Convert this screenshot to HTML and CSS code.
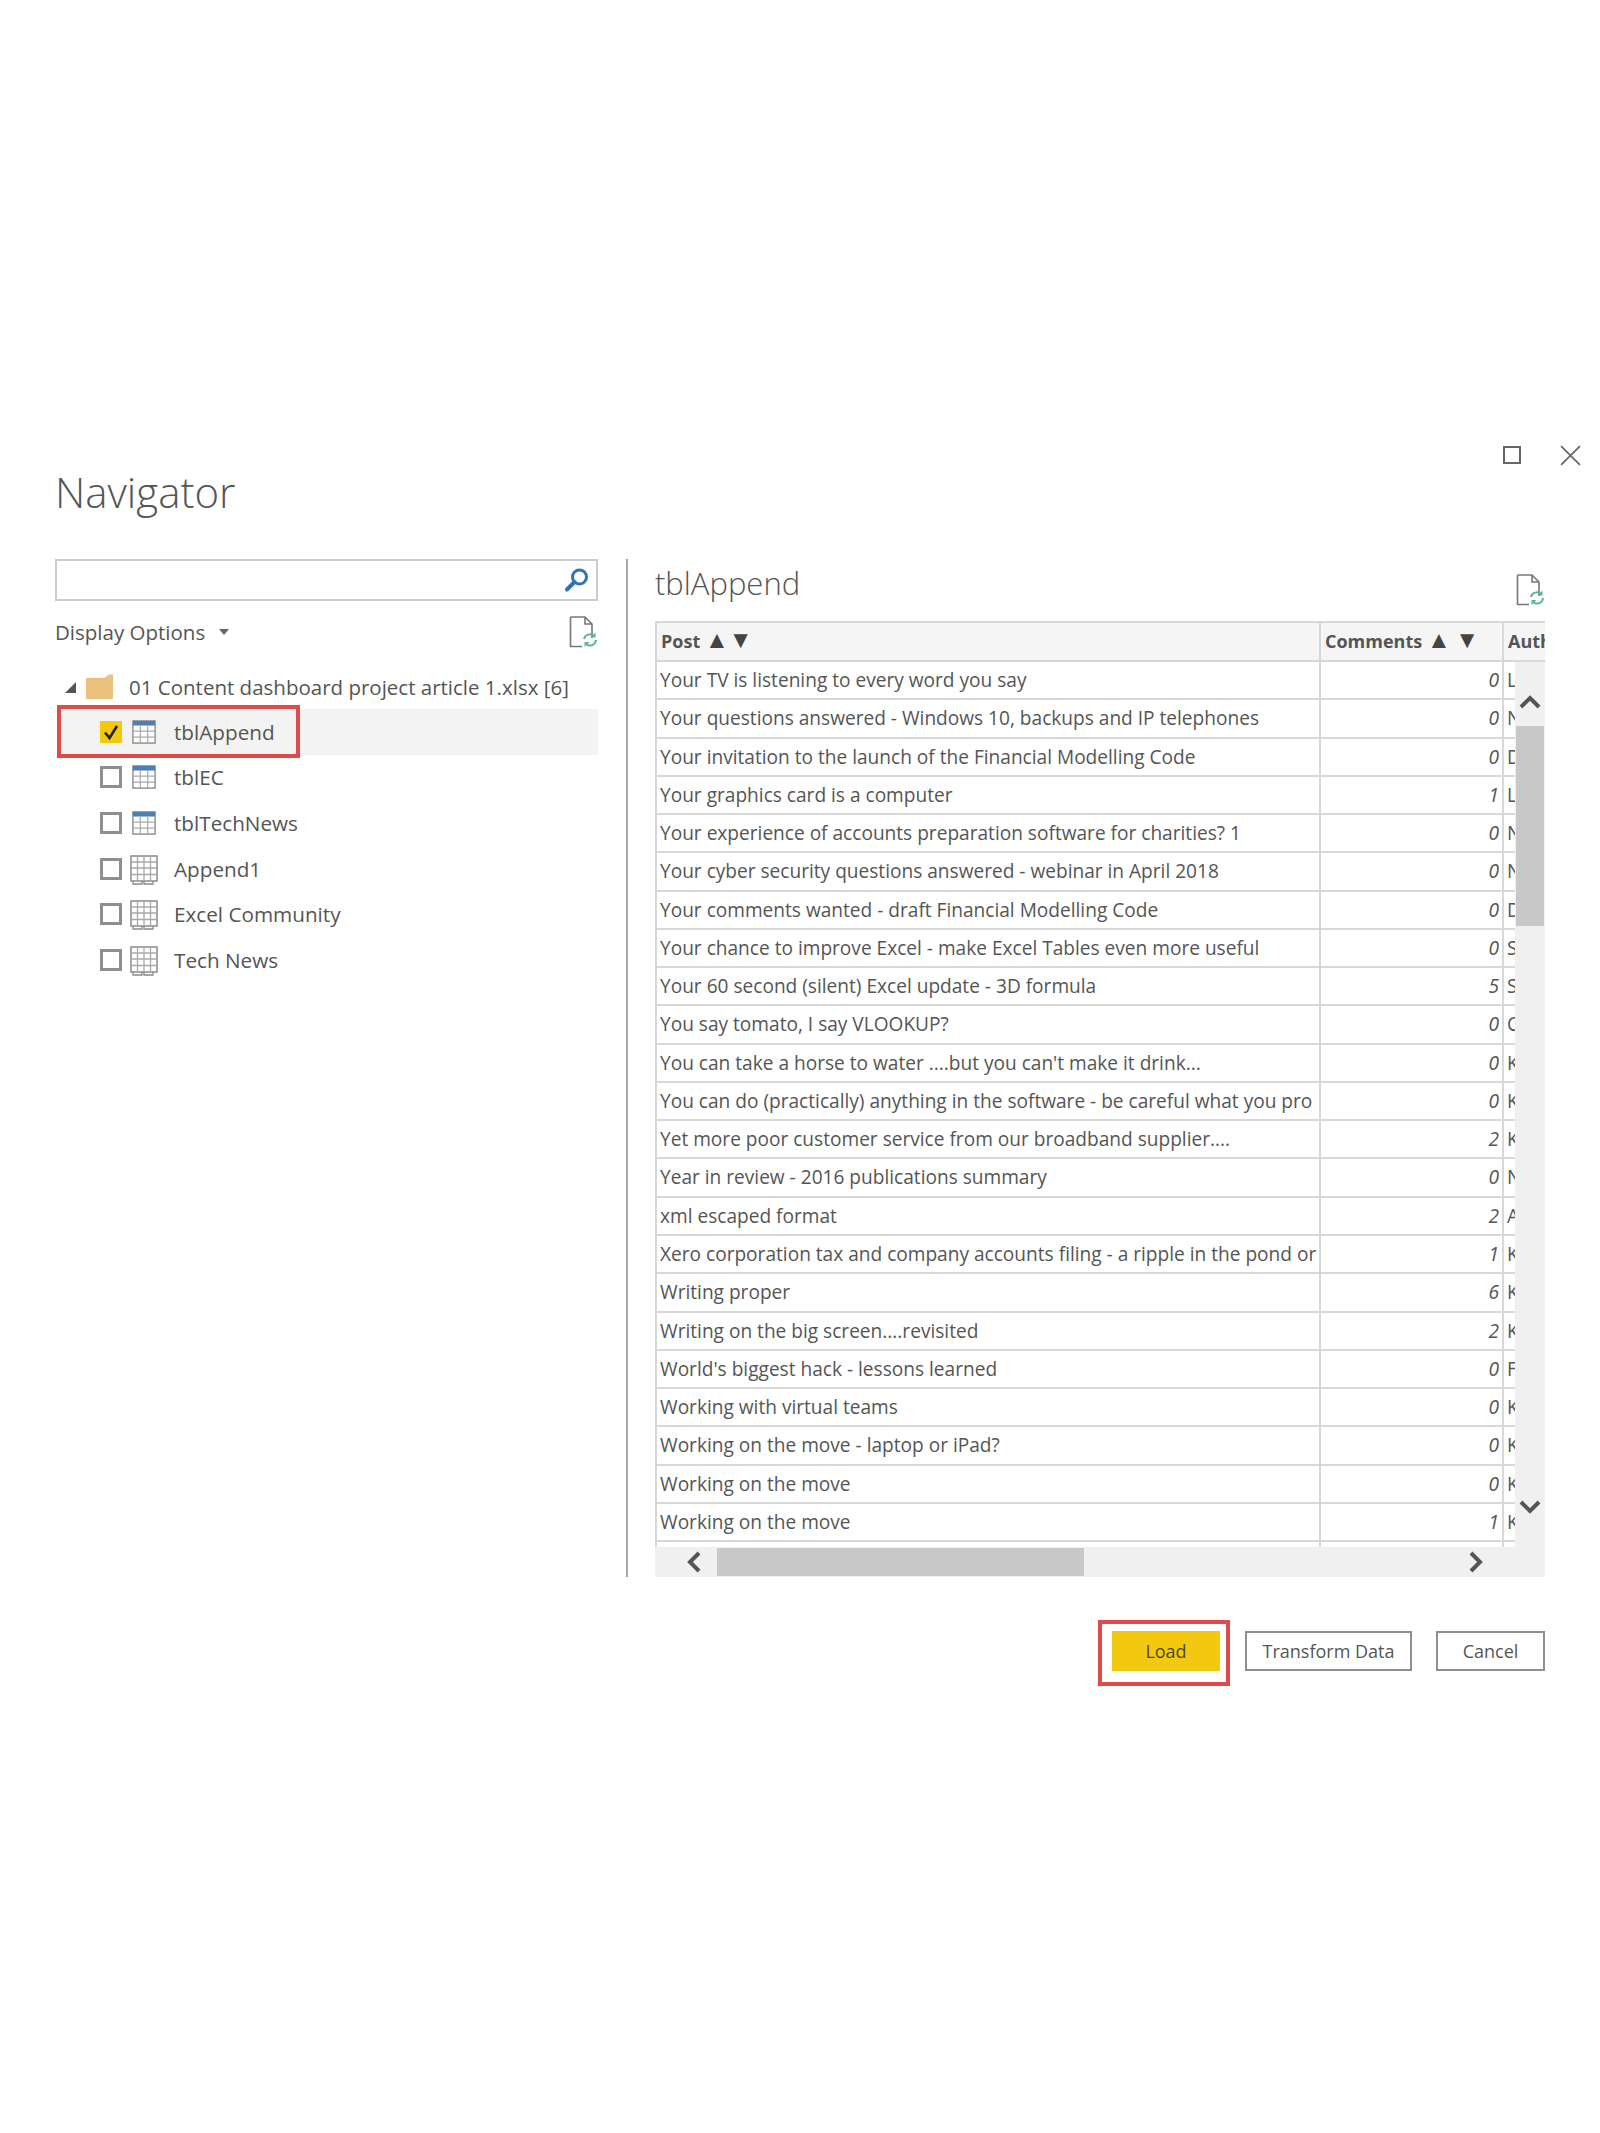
FILE: index.html
```html
<!DOCTYPE html>
<html lang="en">
<head>
  <meta charset="UTF-8" />
  <title>Navigator</title>
  <link rel="stylesheet" href="styles.css">
</head>
<body>
  <!-- Shared icons -->
  <svg class="sprite" width="0" height="0">
    <symbol id="doc-refresh" viewBox="0 0 28 32">
      <path d="M1.5 1H16L23 8V22M16 1V8H23M1.5 1V30.5H13" fill="none" stroke="#777" stroke-width="1.6"/>
      <path d="M15 23a6 6 0 0 1 10-3M27 24a6 6 0 0 1-10 4" fill="none" stroke="#5fb592" stroke-width="2"/>
      <path d="M26.5 16.5V21.500H21.500ZM15.500 31V26H20.500Z" fill="#5fb592"/>
    </symbol>
    <symbol id="tbl" viewBox="0 0 26 26">
      <rect x="1" y="1" width="24" height="24" fill="#fff" stroke="#8a8a8a" stroke-width="1.500"/>
      <rect x="1" y="1" width="24" height="5" fill="#4a7fb8"/>
      <path d="M9 6V25M17 6V25M1 12H25M1 18.500H25" stroke="#a9a9a9" stroke-width="1.300"/>
    </symbol>
    <symbol id="view" viewBox="0 0 28 30">
      <rect x="1" y="1" width="26" height="25" fill="#fff" stroke="#8a8a8a" stroke-width="1.500"/>
      <path d="M7.500 1V26M14 1V26M20.500 1V26M1 7H27M1 13H27M1 19.500H27" stroke="#a9a9a9" stroke-width="1.300"/>
      <path d="M3 26V29H12V26M14 26V29H23V26" fill="none" stroke="#8a8a8a" stroke-width="1.300"/>
    </symbol>
  </svg>

  <div class="dialog">
    <!-- Window buttons -->
    <div class="window-btns">
      <span class="btn-max"></span>
      <svg class="btn-close" viewBox="0 0 20 20"><path d="M1 1L19 19M19 1L1 19" stroke="#666" stroke-width="1.600"/></svg>
    </div>

    <h1 class="title">Navigator</h1>

    <div class="panes">
      <!-- Left pane -->
      <aside class="left">
        <div class="search">
          <svg class="search-icon" viewBox="0 0 24 24">
            <circle cx="14.500" cy="9" r="7" fill="none" stroke="#2f74b5" stroke-width="3"/>
            <path d="M9.500 14L2 21.500" stroke="#2f74b5" stroke-width="4" stroke-linecap="round"/>
          </svg>
        </div>
        <div class="options">
          <span class="options-label">Display Options</span>
          <span class="caret"></span>
          <svg class="doc-icon"><use href="#doc-refresh"/></svg>
        </div>
        <div class="tree-root">
          <span class="expander"></span>
          <svg class="folder" viewBox="0 0 29 26">
            <path d="M1 4H19L24 0.500H28V25H1Z" fill="#e9c27d"/>
          </svg>
          <span>01 Content dashboard project article 1.xlsx [6]</span>
        </div>
        <ul class="tree">
          <li class="tree-item selected">
            <span class="check checked">
              <svg viewBox="0 0 22 22"><path d="M5 11.500L9.500 17L17 5" fill="none" stroke="#222" stroke-width="2.600"/></svg>
            </span>
            <svg class="item-icon"><use href="#tbl"/></svg>
            <span>tblAppend</span>
            <div class="callout"></div>
          </li>
          <li class="tree-item"><span class="check"></span><svg class="item-icon"><use href="#tbl"/></svg><span>tblEC</span></li>
          <li class="tree-item"><span class="check"></span><svg class="item-icon"><use href="#tbl"/></svg><span>tblTechNews</span></li>
          <li class="tree-item"><span class="check"></span><svg class="item-icon wide"><use href="#view"/></svg><span>Append1</span></li>
          <li class="tree-item"><span class="check"></span><svg class="item-icon wide"><use href="#view"/></svg><span>Excel Community</span></li>
          <li class="tree-item"><span class="check"></span><svg class="item-icon wide"><use href="#view"/></svg><span>Tech News</span></li>
        </ul>
      </aside>

      <!-- Preview pane -->
      <section class="preview">
        <div class="preview-top">
          <h2>tblAppend</h2>
          <svg class="doc-icon"><use href="#doc-refresh"/></svg>
        </div>
        <div class="grid-head">
          <div class="cell-post">Post <span class="sort">▲</span><span class="sort">▼</span></div>
          <div class="cell-comments">Comments <span class="sort">▲</span> <span class="sort">▼</span></div>
          <div class="cell-author">Author</div>
        </div>
        <div class="grid-main">
          <div class="grid-rows">
            <div class="row"><div class="cell-post">Your TV is listening to every word you say</div><div class="cell-num">0</div><div class="cell-author">L</div></div>
            <div class="row"><div class="cell-post">Your questions answered - Windows 10, backups and IP telephones</div><div class="cell-num">0</div><div class="cell-author">N</div></div>
            <div class="row"><div class="cell-post">Your invitation to the launch of the Financial Modelling Code</div><div class="cell-num">0</div><div class="cell-author">D</div></div>
            <div class="row"><div class="cell-post">Your graphics card is a computer</div><div class="cell-num">1</div><div class="cell-author">L</div></div>
            <div class="row"><div class="cell-post">Your experience of accounts preparation software for charities? 1</div><div class="cell-num">0</div><div class="cell-author">N</div></div>
            <div class="row"><div class="cell-post">Your cyber security questions answered - webinar in April 2018</div><div class="cell-num">0</div><div class="cell-author">N</div></div>
            <div class="row"><div class="cell-post">Your comments wanted - draft Financial Modelling Code</div><div class="cell-num">0</div><div class="cell-author">D</div></div>
            <div class="row"><div class="cell-post">Your chance to improve Excel - make Excel Tables even more useful</div><div class="cell-num">0</div><div class="cell-author">S</div></div>
            <div class="row"><div class="cell-post">Your 60 second (silent) Excel update - 3D formula</div><div class="cell-num">5</div><div class="cell-author">S</div></div>
            <div class="row"><div class="cell-post">You say tomato, I say VLOOKUP?</div><div class="cell-num">0</div><div class="cell-author">C</div></div>
            <div class="row"><div class="cell-post">You can take a horse to water ....but you can't make it drink...</div><div class="cell-num">0</div><div class="cell-author">K</div></div>
            <div class="row"><div class="cell-post">You can do (practically) anything in the software - be careful what you pro</div><div class="cell-num">0</div><div class="cell-author">K</div></div>
            <div class="row"><div class="cell-post">Yet more poor customer service from our broadband supplier....</div><div class="cell-num">2</div><div class="cell-author">K</div></div>
            <div class="row"><div class="cell-post">Year in review - 2016 publications summary</div><div class="cell-num">0</div><div class="cell-author">N</div></div>
            <div class="row"><div class="cell-post">xml escaped format</div><div class="cell-num">2</div><div class="cell-author">A</div></div>
            <div class="row"><div class="cell-post">Xero corporation tax and company accounts filing - a ripple in the pond or</div><div class="cell-num">1</div><div class="cell-author">K</div></div>
            <div class="row"><div class="cell-post">Writing proper</div><div class="cell-num">6</div><div class="cell-author">K</div></div>
            <div class="row"><div class="cell-post">Writing on the big screen....revisited</div><div class="cell-num">2</div><div class="cell-author">K</div></div>
            <div class="row"><div class="cell-post">World's biggest hack - lessons learned</div><div class="cell-num">0</div><div class="cell-author">F</div></div>
            <div class="row"><div class="cell-post">Working with virtual teams</div><div class="cell-num">0</div><div class="cell-author">K</div></div>
            <div class="row"><div class="cell-post">Working on the move - laptop or iPad?</div><div class="cell-num">0</div><div class="cell-author">K</div></div>
            <div class="row"><div class="cell-post">Working on the move</div><div class="cell-num">0</div><div class="cell-author">K</div></div>
            <div class="row"><div class="cell-post">Working on the move</div><div class="cell-num">1</div><div class="cell-author">K</div></div>
            <div class="row row-stub"><div class="cell-post"></div><div class="cell-num"></div><div class="cell-author"></div></div>
          </div>
          <div class="vscroll">
            <svg class="chev-v" viewBox="0 0 22 14"><path d="M2 12L11 3L20 12" fill="none" stroke="#555" stroke-width="4"/></svg>
            <div class="vthumb"></div>
            <svg class="chev-v chev-down" viewBox="0 0 22 14"><path d="M2 2L11 11L20 2" fill="none" stroke="#555" stroke-width="4"/></svg>
          </div>
        </div>
        <div class="hscroll">
          <svg class="chev-h" viewBox="0 0 14 22"><path d="M12 2L3 11L12 20" fill="none" stroke="#555" stroke-width="4"/></svg>
          <div class="hthumb"></div>
          <svg class="chev-h chev-right" viewBox="0 0 14 22"><path d="M2 2L11 11L2 20" fill="none" stroke="#555" stroke-width="4"/></svg>
        </div>
      </section>
    </div>

    <!-- Footer buttons -->
    <div class="actions">
      <div class="load-callout"><button class="btn btn-load">Load</button></div>
      <button class="btn btn-transform">Transform Data</button>
      <button class="btn btn-cancel">Cancel</button>
    </div>
  </div>
</body>
</html>
```

FILE: styles.css
```css
/* Reset */
* {
  margin: 0;
  padding: 0;
  box-sizing: border-box;
}
body {
  font-family: 'Open Sans', 'Noto Sans', sans-serif;
  background-color: #fff;
  color: #555;
  font-size: 19.1px;
}
.sprite {
  position: absolute;
}
.dialog {
  padding: 445px 19px 0 55px;
}

/* Window buttons */
.window-btns {
  display: flex;
  justify-content: flex-end;
  align-items: center;
  gap: 39px;
  height: 20px;
}
.btn-max {
  width: 18px;
  height: 18px;
  border: 2px solid #666;
}
.btn-close {
  width: 21px;
  height: 21px;
}
.title {
  font-size: 42px;
  font-weight: 300;
  line-height: 56px;
  color: #555;
  margin-top: -1px;
}

/* Panes */
.panes {
  display: flex;
  margin-top: 39px;
  padding-right: 36px;
}
.left {
  width: 543px;
  flex: none;
}
.search {
  height: 42px;
  border: 2px solid #ccc;
  display: flex;
  justify-content: flex-end;
  align-items: center;
  padding-right: 7px;
}
.search-icon {
  width: 24px;
  height: 24px;
}
.options {
  display: flex;
  align-items: center;
  height: 64px;
  padding-right: 1px;
  padding-bottom: 3px;
}
.options-label {
  font-size: 20.5px;
}
.caret {
  margin-left: 14px;
  border: 5px solid transparent;
  border-top: 6px solid #666;
  border-bottom: 0;
}
.doc-icon {
  width: 28px;
  height: 32px;
  margin-left: auto;
}
.tree-root {
  display: flex;
  align-items: center;
  height: 44px;
  padding-left: 10px;
  font-size: 20.5px;
}
.expander {
  width: 0;
  height: 0;
  border-left: 11px solid transparent;
  border-bottom: 11px solid #555;
  margin-right: 9px;
}
.folder {
  width: 29px;
  height: 26px;
  margin-right: 15px;
}
.tree {
  list-style: none;
}
.tree-item {
  position: relative;
  display: flex;
  align-items: center;
  height: 45.6px;
  padding-left: 45px;
  font-size: 20.7px;
}
.tree-item.selected {
  background-color: #f3f3f3;
  margin-left: 2px;
  padding-left: 43px;
}
.check {
  width: 22px;
  height: 22px;
  border: 3px solid #8f8f8f;
  background-color: #fff;
  flex: none;
}
.check.checked {
  border: 0;
  background-color: #f2c811;
}
.check svg {
  display: block;
}
.item-icon {
  width: 24px;
  height: 24px;
  margin: 0 18px 0 10px;
  flex: none;
}
.item-icon.wide {
  width: 28px;
  height: 30px;
  margin: 2px 16px 0 8px;
}
.callout {
  position: absolute;
  left: 0;
  top: -4px;
  width: 243px;
  height: 53px;
  border: 4px solid #e04a4a;
}

/* Preview */
.preview {
  flex: 1;
  margin-left: 28px;
  border-left: 2px solid #a8a8a8;
  padding-left: 27px;
  min-width: 0;
}
.preview-top {
  display: flex;
  align-items: flex-start;
  justify-content: space-between;
  height: 62px;
  padding-right: 1px;
}
.preview-top h2 {
  font-size: 31px;
  font-weight: 300;
  line-height: 48px;
  color: #555;
}
.preview-top .doc-icon {
  margin-top: 15px;
}
.grid-head {
  display: grid;
  grid-template-columns: 664px 183px 1fr;
  height: 41px;
  align-items: stretch;
  background-color: #f5f5f5;
  border-top: 2px solid #d8d8d8;
  border-bottom: 2px solid #d8d8d8;
  border-left: 2px solid #d8d8d8;
  font-size: 18px;
  font-weight: 700;
  overflow: hidden;
}
.grid-head > div {
  padding-left: 4px;
  line-height: 36px;
  border-right: 2px solid #d8d8d8;
  white-space: nowrap;
}
.grid-head > .cell-author {
  border-right: 0;
}
.sort {
  font-size: 24px;
  line-height: 0;
  color: #444;
}
.grid-main {
  display: flex;
  height: 885px;
}
.grid-rows {
  flex: 1;
  min-width: 0;
  overflow: hidden;
  border-left: 2px solid #d8d8d8;
}
.row {
  display: grid;
  grid-template-columns: 664px 183px 1fr;
  height: 38.28px;
  line-height: 36px;
  border-bottom: 2px solid #d8d8d8;
}
.row > div {
  white-space: nowrap;
  overflow: hidden;
  border-right: 2px solid #d8d8d8;
  padding-left: 3px;
}
.row > .cell-num {
  text-align: right;
  font-style: italic;
  padding: 0 3px 0 0;
}
.row > .cell-author {
  border-right: 0;
}
.row-stub {
  border-bottom: 0;
}
.vscroll {
  position: relative;
  width: 30px;
  background-color: #f0f0f0;
  display: flex;
  flex-direction: column;
  align-items: center;
}
.chev-v {
  width: 22px;
  height: 14px;
  margin-top: 33px;
  flex: none;
}
.vthumb {
  width: 28px;
  height: 200px;
  margin-top: 17px;
  background-color: #c8c8c8;
  flex: none;
}
.chev-down {
  margin-top: 574px;
}
.hscroll {
  display: flex;
  align-items: center;
  height: 30px;
  background-color: #f0f0f0;
  padding: 0 62px 0 32px;
}
.chev-h {
  width: 14px;
  height: 22px;
  flex: none;
}
.hthumb {
  width: 367px;
  height: 28px;
  margin-left: 16px;
  background-color: #c8c8c8;
}
.chev-right {
  margin-left: auto;
}

/* Footer buttons */
.actions {
  display: flex;
  justify-content: flex-end;
  align-items: flex-start;
  margin-top: 43px;
  padding-right: 36px;
}
.btn {
  height: 40px;
  font-family: inherit;
  font-size: 18px;
  color: #555;
  background-color: #fff;
  border: 2px solid #8f8f8f;
}
.load-callout {
  padding: 7px 6px 11px 10px;
  border: 4px solid #e04a4a;
  margin-right: 15px;
}
.btn-load {
  display: block;
  width: 108px;
  background-color: #f2c811;
  border: 0;
  color: #4a4a2a;
}
.btn-transform {
  width: 167px;
  margin: 11px 24px 0 0;
}
.btn-cancel {
  width: 109px;
  margin-top: 11px;
}
```
